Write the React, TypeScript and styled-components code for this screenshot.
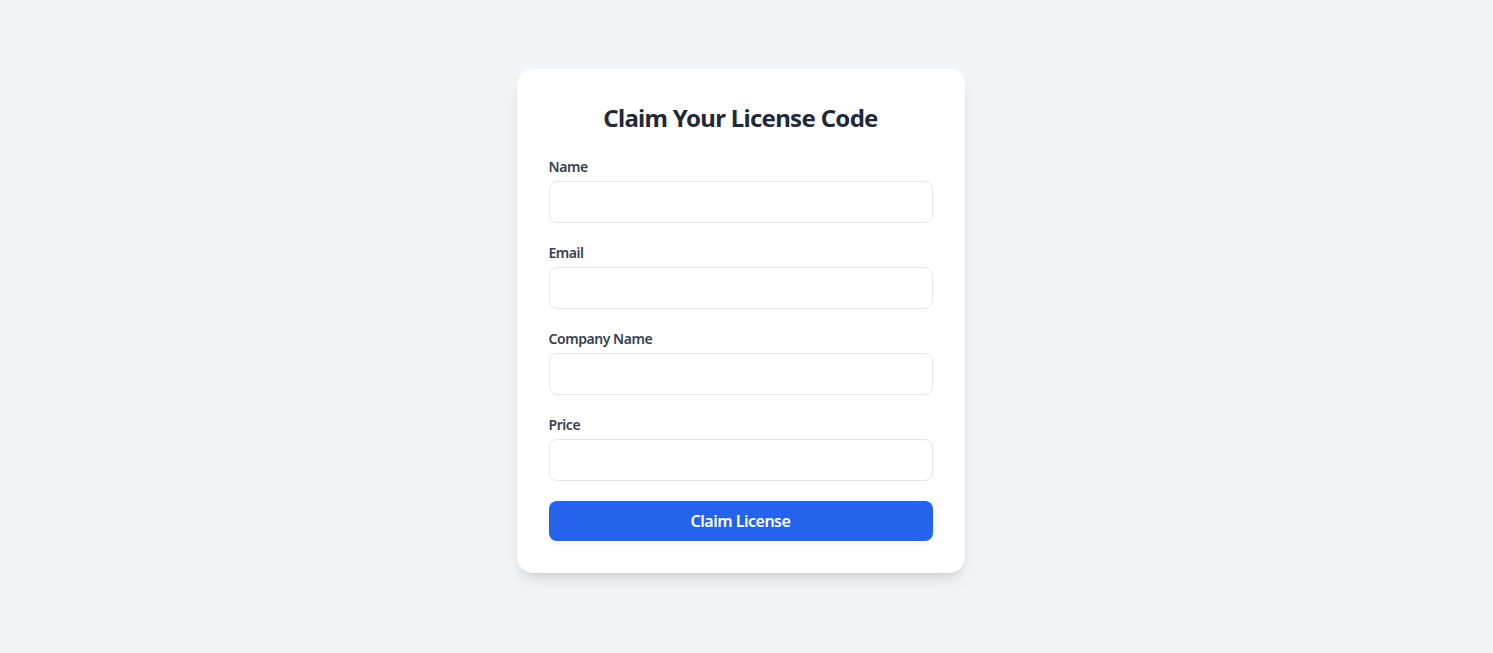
import styled, { createGlobalStyle } from 'styled-components';

const GlobalStyle = createGlobalStyle`
    html, body {
        margin: 0;
        padding: 0;
        background: #f3f4f6;
        font-family: 'Noto Sans', 'Open Sans', sans-serif;
    }
    * {
        box-sizing: border-box;
    }
`;

const Page = styled.div`
    min-height: 653px;
    display: flex;
    justify-content: center;
    align-items: flex-start;
    padding: 69px 12px 0 0;
`;

const Card = styled.form`
    width: 448px;
    background: #ffffff;
    border-radius: 16px;
    padding: 32px;
    box-shadow: 0 10px 15px -3px rgba(0, 0, 0, 0.1), 0 4px 6px -4px rgba(0, 0, 0, 0.1);
    display: flex;
    flex-direction: column;
`;

const Title = styled.h2`
    margin: 1px 0 23px;
    font-size: 24px;
    line-height: 32px;
    font-weight: 700;
    letter-spacing: -0.7px;
    color: #1f2937;
    text-align: center;
`;

const Field = styled.div`
    display: flex;
    flex-direction: column;
    margin-bottom: 20px;
`;

const Label = styled.label`
    font-size: 14px;
    line-height: 20px;
    font-weight: 600;
    letter-spacing: -0.45px;
    color: #374151;
    margin-bottom: 4px;
`;

const Input = styled.input`
    width: 100%;
    height: 42px;
    border: 1px solid #e5e7eb;
    border-radius: 8px;
    padding: 8px 12px;
    font-family: inherit;
    font-size: 16px;
    color: #111827;
    outline: none;

    &:focus {
        border-color: #2563eb;
    }
`;

const SubmitButton = styled.button`
    height: 40px;
    border: none;
    border-radius: 8px;
    background: #2563eb;
    color: #ffffff;
    font-family: inherit;
    font-size: 16px;
    font-weight: 600;
    letter-spacing: -0.5px;
    cursor: pointer;
    box-shadow: 0 2px 4px rgba(0, 0, 0, 0.08);

    &:hover {
        background: #1d4ed8;
    }
`;

const fields = [
    { name: 'name', label: 'Name', type: 'text' },
    { name: 'email', label: 'Email', type: 'email' },
    { name: 'company', label: 'Company Name', type: 'text' },
    { name: 'price', label: 'Price', type: 'text' },
];

export default function App() {
    return (
        <>
            <GlobalStyle />
            <Page>
                <Card onSubmit={(e) => e.preventDefault()}>
                    <Title>Claim Your License Code</Title>
                    {fields.map((f) => (
                        <Field key={f.name}>
                            <Label htmlFor={f.name}>{f.label}</Label>
                            <Input id={f.name} name={f.name} type={f.type} />
                        </Field>
                    ))}
                    <SubmitButton type="submit">Claim License</SubmitButton>
                </Card>
            </Page>
        </>
    );
}
